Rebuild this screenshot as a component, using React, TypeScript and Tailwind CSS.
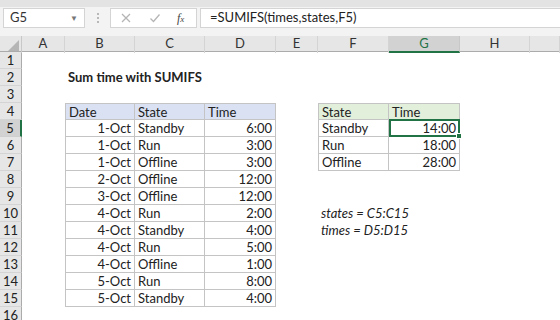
const font = { fontFamily: "Lato, 'Liberation Sans', sans-serif" };

const cols = ["A", "B", "C", "D", "E", "F", "G", "H", ""];

const data: [string, string, string][] = [
  ["1-Oct", "Standby", "6:00"],
  ["1-Oct", "Run", "3:00"],
  ["1-Oct", "Offline", "3:00"],
  ["2-Oct", "Offline", "12:00"],
  ["3-Oct", "Offline", "12:00"],
  ["4-Oct", "Run", "2:00"],
  ["4-Oct", "Standby", "4:00"],
  ["4-Oct", "Run", "5:00"],
  ["4-Oct", "Offline", "1:00"],
  ["5-Oct", "Run", "8:00"],
  ["5-Oct", "Standby", "4:00"],
];

const summary: [string, string][] = [
  ["Standby", "14:00"],
  ["Run", "18:00"],
  ["Offline", "28:00"],
];

const grid =
  "grid grid-cols-[22px_43px_70px_70px_71px_42px_71px_71px_70px_1fr]";

// table cell border
const tb = "border-r border-b border-[#c4c4c4]";

function Cell({
  children,
  className = "",
}: {
  children?: React.ReactNode;
  className?: string;
}) {
  return (
    <div className={`h-[17px] leading-[16px] px-[3px] whitespace-nowrap ${className}`}>
      {children}
    </div>
  );
}

export default function App() {
  const rows = Array.from({ length: 16 }, (_, i) => i + 1);

  return (
    <div className="w-[560px] h-[320px] overflow-hidden bg-white text-[13px] text-[#222]" style={font}>
      {/* Formula bar */}

      <div className="h-[36px] bg-[#f3f3f3] border-t-[7px] border-[#e3e3e3] flex items-start pt-[1px]">
        <div className="ml-[3px] w-[82px] h-[20px] bg-white border border-[#d4d4d4] flex items-center justify-between px-[6px] text-[#333]">
          <span>G5</span>
          <span className="text-[8px] text-[#777]">▼</span>
        </div>

        <div className="w-[25px] h-[20px] flex flex-col items-center justify-center gap-[2px]">
          <span className="w-[2px] h-[2px] bg-[#b8b8b8]" />
          <span className="w-[2px] h-[2px] bg-[#b8b8b8]" />
          <span className="w-[2px] h-[2px] bg-[#b8b8b8]" />
        </div>

        <div className="w-[87px] h-[20px] bg-white border border-[#d4d4d4] flex items-center">
          <svg width="12" height="12" viewBox="0 0 12 12" className="ml-[9px]">
            <path d="M2 2 L10 10 M10 2 L2 10" stroke="#b5b5b5" strokeWidth="1.3" />
          </svg>
          <svg width="12" height="12" viewBox="0 0 12 12" className="ml-[17px]">
            <path d="M1.5 6.5 L4.5 9.5 L10.5 2.5" stroke="#b5b5b5" strokeWidth="1.3" fill="none" />
          </svg>
          <span
            className="ml-[16px] text-[12px] italic text-[#444]"
            style={{ fontFamily: "'Liberation Serif', serif" }}
          >
            f<span className="text-[9px]">x</span>
          </span>
        </div>

        <div className="ml-[3px] flex-1 h-[20px] bg-white border border-[#d4d4d4] border-r-0 flex items-center pl-[9px] text-[#222]">
          =SUMIFS(times,states,F5)
        </div>
      </div>

      {/* Column headers */}

      <div className={`${grid} h-[16px] bg-[#e6e6e6] border-b border-[#ababab] text-[#333]`}>
        <div className="relative border-r border-[#c8c8c8]">
          <div className="absolute right-[2px] bottom-[2px] w-0 h-0 border-l-[11px] border-l-transparent border-b-[11px] border-b-[#b5b5b5]" />
        </div>
        {cols.map((c) => (
          <div
            key={c || "I"}
            className={
              c === "G"
                ? "bg-[#d2d2d2] border-b-2 border-[#217346] text-[#217346] text-center leading-[15px] border-r border-r-[#c8c8c8]"
                : "text-center leading-[15px] border-r border-[#d4d4d4]"
            }
          >
            {c}
          </div>
        ))}
      </div>

      {/* Sheet rows */}

      {rows.map((r) => {
        const d = r >= 5 && r <= 15 ? data[r - 5] : null;
        const s = r >= 5 && r <= 7 ? summary[r - 5] : null;

        return (
          <div key={r} className={grid}>
            <div
              className={
                r === 5
                  ? "h-[17px] leading-[16px] text-center bg-[#d2d2d2] border-r-2 border-[#217346] border-b border-b-[#cfcfcf]"
                  : "h-[17px] leading-[16px] text-center bg-[#e6e6e6] border-r border-[#ababab] border-b border-b-[#d4d4d4]"
              }
            >
              {r}
            </div>

            <Cell />

            {r === 2 && (
              <Cell className="font-bold col-span-3">Sum time with SUMIFS</Cell>
            )}

            {r === 4 && (
              <>
                <Cell className={`${tb} border-l border-t bg-[#d9e1f2] leading-[14px]`}>Date</Cell>
                <Cell className={`${tb} border-t bg-[#d9e1f2] leading-[14px]`}>State</Cell>
                <Cell className={`${tb} border-t bg-[#d9e1f2] leading-[14px]`}>Time</Cell>
                <Cell />
                <Cell className={`${tb} border-l border-t bg-[#e2efda] leading-[14px]`}>State</Cell>
                <Cell className={`${tb} border-t bg-[#e2efda] leading-[14px]`}>Time</Cell>
              </>
            )}

            {d && (
              <>
                <Cell className={`${tb} border-l text-right`}>{d[0]}</Cell>
                <Cell className={tb}>{d[1]}</Cell>
                <Cell className={`${tb} text-right`}>{d[2]}</Cell>
                <Cell />
                {s && (
                  <>
                    <Cell className={`${tb} border-l`}>{s[0]}</Cell>
                    {r === 5 ? (
                      <div className="relative h-[18px] -mt-px leading-[14px] px-[2px] text-right border-2 border-[#217346]">
                        {s[1]}
                        <span className="absolute -right-[4px] -bottom-[4px] w-[6px] h-[6px] bg-[#217346] border border-white" />
                      </div>
                    ) : (
                      <Cell className={`${tb} text-right`}>{s[1]}</Cell>
                    )}
                  </>
                )}
                {r === 10 && <Cell className="italic col-span-2">states = C5:C15</Cell>}
                {r === 11 && <Cell className="italic col-span-2">times = D5:D15</Cell>}
              </>
            )}

            {!d && r !== 2 && r !== 4 && <Cell />}
          </div>
        );
      })}
    </div>
  );
}
